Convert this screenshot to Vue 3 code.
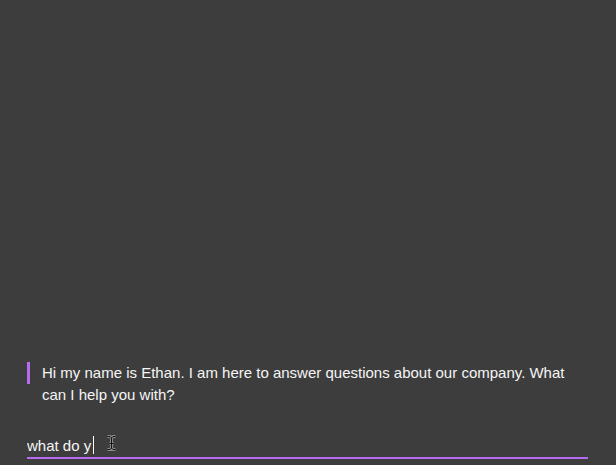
<script setup>
import { ref } from 'vue'

const messages = ref([
  'Hi my name is Ethan. I am here to answer questions about our company. What can I help you with?',
])
const draft = ref('what do y')
</script>

<template>
  <main class="chat">
    <section class="messages" aria-label="Conversation">
      <p v-for="(message, i) in messages" :key="i" class="message">{{ message }}</p>
    </section>
    <form class="composer" @submit.prevent>
      <input v-model="draft" class="field" type="text" aria-label="Your question" autocomplete="off" />
      <span class="caret" aria-hidden="true"></span>
      <svg class="pointer" viewBox="0 0 11 18" aria-hidden="true">
        <path class="halo" d="M1.5 2.5H4L5.5 4V14L4 15.5H1.5M9.5 2.5H7L5.5 4M5.5 14L7 15.5H9.5M3.5 9.5H7.5" />
        <path class="beam" d="M1.5 2.5H4L5.5 4V14L4 15.5H1.5M9.5 2.5H7L5.5 4M5.5 14L7 15.5H9.5M3.5 9.5H7.5" />
      </svg>
    </form>
  </main>
</template>

<style>
body {
  margin: 0;
  background: #3d3d3d;
}
</style>

<style scoped>
.chat {
  box-sizing: border-box;
  min-height: 100vh;
  padding: 0 28px 6px 27px;
  display: flex;
  flex-direction: column;
  justify-content: flex-end;
  gap: 28px;
  background: #3d3d3d;
  color: #f5f5f5;
  font-family: "Liberation Sans", Arial, sans-serif;
  font-size: 15px;
  line-height: 22px;
}

.messages {
  display: flex;
  flex-direction: column;
  gap: 24px;
}

.message {
  position: relative;
  margin: 0;
  padding: 0 12px 0 15px;
}

.message::before {
  content: "";
  position: absolute;
  left: 0;
  top: 0;
  width: 3px;
  height: 22px;
  background: #b56cf0;
}

.composer {
  position: relative;
}

.field {
  display: block;
  box-sizing: border-box;
  width: 100%;
  height: 25px;
  margin: 0;
  padding: 0 0 1px;
  border: 0;
  border-bottom: 2px solid #b56cf0;
  border-radius: 0;
  outline: 0;
  background: transparent;
  color: inherit;
  font: inherit;
  caret-color: transparent;
}

.caret {
  position: absolute;
  left: 66px;
  top: 2px;
  width: 1px;
  height: 18px;
  background: #fff;
}

.pointer {
  position: absolute;
  left: 79px;
  top: 0;
  width: 11px;
  height: 18px;
  fill: none;
}

.halo {
  stroke: #8a8a8a;
  stroke-width: 3;
}

.beam {
  stroke: #111;
  stroke-width: 1;
}
</style>
